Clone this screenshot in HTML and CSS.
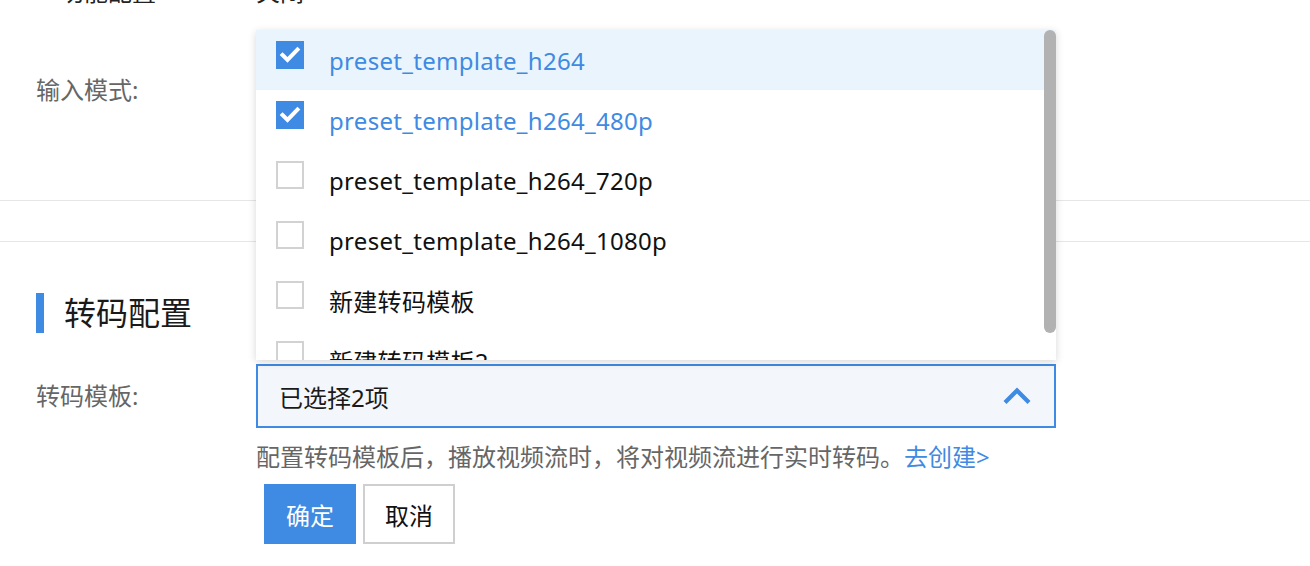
FILE: index.html
```html
<!DOCTYPE html>
<html lang="zh-CN">
<head>
    <meta charset="UTF-8">
    <meta name="viewport" content="width=device-width, initial-scale=1.0">
    <title>转码配置</title>
    <link rel="stylesheet" href="styles.css">
</head>
<body>
    <div class="cut-row">
        <span class="cut-label">功能配置</span>
        <span class="cut-value">关闭</span>
    </div>
    <div class="form-row mode-row">
        <label class="form-label">输入模式:</label>
        <div class="form-field"></div>
    </div>
    <div class="split"></div>
    <section class="section">
        <h2 class="section-title">转码配置</h2>
        <div class="form-row">
            <label class="form-label tpl-label">转码模板:</label>
            <div class="form-field">
                <div class="select-wrap">
                    <div class="dropdown">
                        <ul class="option-list">
                            <li class="option checked active">
                                <span class="checkbox"><svg viewBox="0 0 28 28" width="28" height="28"><polyline points="6.5,14 11.5,19 21.5,8.5" fill="none" stroke="#fff" stroke-width="4" stroke-linecap="square"/></svg></span>
                                <span class="option-text">preset_template_h264</span>
                            </li>
                            <li class="option checked">
                                <span class="checkbox"><svg viewBox="0 0 28 28" width="28" height="28"><polyline points="6.5,14 11.5,19 21.5,8.5" fill="none" stroke="#fff" stroke-width="4" stroke-linecap="square"/></svg></span>
                                <span class="option-text">preset_template_h264_480p</span>
                            </li>
                            <li class="option">
                                <span class="checkbox"></span>
                                <span class="option-text">preset_template_h264_720p</span>
                            </li>
                            <li class="option">
                                <span class="checkbox"></span>
                                <span class="option-text">preset_template_h264_1080p</span>
                            </li>
                            <li class="option">
                                <span class="checkbox"></span>
                                <span class="option-text">新建转码模板</span>
                            </li>
                            <li class="option">
                                <span class="checkbox"></span>
                                <span class="option-text">新建转码模板2</span>
                            </li>
                        </ul>
                        <div class="scroll-thumb"></div>
                    </div>
                    <div class="select">
                        <span>已选择2项</span>
                        <svg class="arrow" viewBox="0 0 30 18" width="30" height="18"><polyline points="3,15.5 15,3.5 27,15.5" fill="none" stroke="#3f8ae2" stroke-width="4.2"/></svg>
                    </div>
                </div>
                <p class="help">配置转码模板后，播放视频流时，将对视频流进行实时转码。<a href="#" class="link">去创建&gt;</a></p>
                <div class="actions">
                    <button class="btn btn-primary">确定</button>
                    <button class="btn">取消</button>
                </div>
            </div>
        </div>
    </section>
</body>
</html>
```

FILE: styles.css
```css
body {
    margin: 0;
    font-family: "Noto Sans", "Noto Sans CJK SC", sans-serif;
    font-size: 24px;
    color: #222;
    background-color: #fff;
    overflow: hidden;
}
.cut-row {
    display: flex;
    height: 24px;
    line-height: 24px;
    margin-top: -20px;
    padding-left: 60px;
}
.cut-value {
    margin-left: 100px;
}
.form-row {
    display: flex;
    align-items: flex-start;
}
.form-label {
    width: 220px;
    padding-left: 36px;
    color: #666;
    flex-shrink: 0;
}
.mode-row {
    height: 196px;
    box-sizing: border-box;
    padding-top: 70px;
}
.mode-row .form-label {
    line-height: 32px;
}
.split {
    height: 40px;
    border-top: 1px solid #e6e6e6;
    border-bottom: 1px solid #e6e6e6;
}
.section {
    padding-top: 51px;
}
.section-title {
    margin: 0 0 31px 36px;
    height: 40px;
    line-height: 40px;
    padding-left: 20px;
    border-left: 8px solid #3f8ae2;
    font-size: 32px;
    font-weight: normal;
    color: #1a1a1a;
}
.tpl-label {
    line-height: 64px;
}
.form-field {
    width: 800px;
}
.select-wrap {
    position: relative;
}
.select {
    height: 64px;
    box-sizing: border-box;
    border: 2px solid #3f8ae2;
    background-color: #f3f6fb;
    display: flex;
    align-items: center;
    justify-content: space-between;
    padding: 0 22px 0 21px;
    color: #1a1a1a;
}
.dropdown {
    position: absolute;
    left: 0;
    bottom: 68px;
    width: 800px;
    height: 330px;
    overflow: hidden;
    background-color: #fff;
    box-shadow: 0 2px 8px rgba(0, 0, 0, 0.16);
    z-index: 2;
}
.option-list {
    list-style: none;
    margin: 0;
    padding: 0;
}
.option {
    height: 60px;
    display: flex;
    align-items: center;
    padding-left: 20px;
}
.option.active {
    background-color: #eaf4fd;
}
.checkbox {
    width: 28px;
    height: 28px;
    box-sizing: border-box;
    border: 2px solid #d2d2d2;
    margin-right: 25px;
    margin-bottom: 10px;
    display: flex;
    flex-shrink: 0;
}
.option.checked .checkbox {
    border: none;
    background-color: #3f8ae2;
}
.option.checked .option-text {
    color: #3f8ae2;
}
.option-text {
    color: #111;
    letter-spacing: 0.3px;
}
.scroll-thumb {
    position: absolute;
    top: 0;
    right: 0;
    width: 12px;
    height: 303px;
    border-radius: 6px;
    background-color: #b2b2b2;
}
.help {
    margin: 11px 0 0;
    line-height: 36px;
    color: #666;
}
.link {
    color: #3f8ae2;
    text-decoration: none;
}
.actions {
    display: flex;
    gap: 7px;
    margin-top: 9px;
    padding-left: 8px;
}
.btn {
    width: 92px;
    height: 60px;
    font-family: inherit;
    font-size: 24px;
    background-color: #fff;
    border: 2px solid #cfcfcf;
    color: #111;
    padding: 0;
}
.btn-primary {
    background-color: #3f8ae2;
    border-color: #3f8ae2;
    color: #fff;
}
```
